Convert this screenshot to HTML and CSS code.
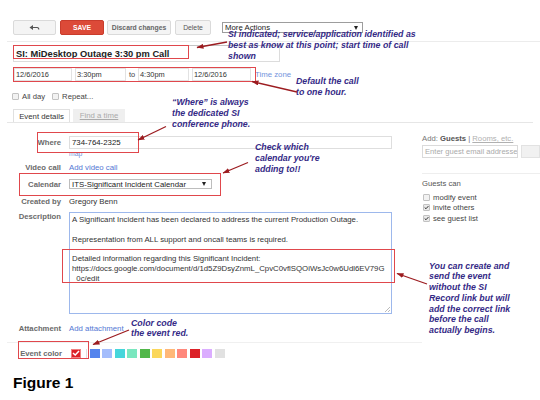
FILE: index.html
```html
<!DOCTYPE html>
<html>
<head>
<meta charset="utf-8">
<link rel="stylesheet" href="styles.css">
</head>
<body>
<div class="page">
  <div class="toolbar">
    <div class="btn btn-back">
      <svg width="11" height="6" viewBox="0 0 11 6"><path d="M0.5 2.5 L4 0 L4 5 Z" fill="#555"/><path d="M3.5 2.5 H8.2 Q9.8 2.5 9.8 4.6" stroke="#555" stroke-width="1.2" fill="none"/></svg>
    </div>
    <div class="btn btn-save">SAVE</div>
    <div class="btn btn-discard">Discard changes</div>
    <div class="btn btn-delete">Delete</div>
    <div class="more">More Actions<span class="caret"></span></div>
  </div>
  <div class="rule rule-top"></div>

  <div class="title-input">SI: MiDesktop Outage 3:30 pm Call</div>

  <div class="date-row">
    <div class="field f-date1">12/6/2016</div>
    <div class="field f-time1">3:30pm</div>
    <span class="to">to</span>
    <div class="field f-time2">4:30pm</div>
    <div class="field f-date2">12/6/2016</div>
    <span class="link tz">Time zone</span>
  </div>

  <div class="check-row">
    <span class="cb"></span><span class="cb-label">All day</span>
    <span class="cb cb-gap"></span><span class="cb-label">Repeat...</span>
  </div>

  <div class="tabs">
    <div class="tab tab-active">Event details</div>
    <div class="tab tab-inactive">Find a time</div>
  </div>

  <div class="main">
    <div class="form">
      <div class="row row-where">
        <div class="label">Where</div>
        <div class="input where-input">734-764-2325</div>
      </div>
      <div class="row row-map">
        <div class="label"></div>
        <span class="link map">map</span>
      </div>
      <div class="row row-video">
        <div class="label">Video call</div>
        <span class="link">Add video call</span>
      </div>
      <div class="row row-cal">
        <div class="label">Calendar</div>
        <div class="cal-select">ITS-Significant Incident Calendar<span class="caret"></span></div>
      </div>
      <div class="row row-created">
        <div class="label">Created by</div>
        <span class="value">Gregory Benn</span>
      </div>
      <div class="row row-desc">
        <div class="label">Description</div>
        <div class="desc">
          <div class="dline">A Significant Incident has been declared to address the current Production Outage.</div>
          <div class="dline"></div>
          <div class="dline">Representation from ALL support and oncall teams is required.</div>
          <div class="dline"></div>
          <div class="dline">Detailed information regarding this Significant Incident:</div>
          <div class="dline">https://docs.google.com/document/d/1d5Z9DsyZnmL_CpvC0vflSQOiWsJc0w6Udl6EV79G</div>
          <div class="dline">_0c/edit</div>
          <span class="grip"></span>
        </div>
      </div>
      <div class="row row-attach">
        <div class="label">Attachment</div>
        <span class="link">Add attachment</span>
      </div>
      <div class="rule rule-form"></div>
      <div class="row row-color">
        <div class="label">Event color</div>
        <div class="swatches">
          <span class="sw sw-checked">
            <svg width="8" height="6" viewBox="0 0 8 6"><path d="M1 3 L3.2 5 L7 1" stroke="#fff" stroke-width="1.5" fill="none"/></svg>
          </span>
          <span class="sw-sep"></span>
          <span class="sw c1"></span>
          <span class="sw c2"></span>
          <span class="sw c3"></span>
          <span class="sw c4"></span>
          <span class="sw c5"></span>
          <span class="sw c6"></span>
          <span class="sw c7"></span>
          <span class="sw c8"></span>
          <span class="sw c9"></span>
          <span class="sw c10"></span>
          <span class="sw c11"></span>
        </div>
      </div>
    </div>

    <div class="side">
      <div class="add-line"><span class="muted">Add:</span> <b>Guests</b> <span class="muted">|</span> <span class="rooms">Rooms, etc.</span></div>
      <div class="guest-row">
        <div class="guest-input">Enter guest email addresse</div>
        <div class="guest-btn"></div>
      </div>
      <div class="rule rule-side"></div>
      <div class="gc-title">Guests can</div>
      <div class="gc-row"><span class="cb"></span>modify event</div>
      <div class="gc-row"><span class="cb cb-on"><svg width="6" height="5" viewBox="0 0 6 5"><path d="M0.8 2.5 L2.4 4 L5.3 0.8" stroke="#333" stroke-width="1.2" fill="none"/></svg></span>invite others</div>
      <div class="gc-row"><span class="cb cb-on"><svg width="6" height="5" viewBox="0 0 6 5"><path d="M0.8 2.5 L2.4 4 L5.3 0.8" stroke="#333" stroke-width="1.2" fill="none"/></svg></span>see guest list</div>
    </div>
  </div>

  <div class="figure">Figure 1</div>

  <!-- annotation overlays -->
  <div class="hl hl-title"></div>
  <div class="hl hl-date"></div>
  <div class="hl hl-where"></div>
  <div class="hl hl-cal"></div>
  <div class="hl hl-desc"></div>
  <div class="hl hl-color"></div>

  <div class="note n1">SI indicated; service/application identified as<br>best as know at this point; start time of call<br>shown</div>
  <div class="note n2">Default the call<br>to one hour.</div>
  <div class="note n3">“Where” is always<br>the dedicated SI<br>conference phone.</div>
  <div class="note n4">Check which<br>calendar you're<br>adding to!!</div>
  <div class="note n5">You can create and<br>send the event<br>without the SI<br>Record link but will<br>add the correct link<br>before the call<br>actually begins.</div>
  <div class="note n6">Color code<br>the event red.</div>

  <svg class="arrows" width="540" height="400" viewBox="0 0 540 400">
    <defs>
      <marker id="ah" markerWidth="7" markerHeight="5" refX="6.5" refY="2.5" orient="auto" markerUnits="userSpaceOnUse">
        <path d="M0,0 L7,2.5 L0,5 Z" fill="#9c1c20"/>
      </marker>
    </defs>
    <g stroke="#9c1c20" stroke-width="1.3" fill="none">
      <line x1="227" y1="42" x2="197" y2="47.5" marker-end="url(#ah)"/>
      <line x1="297" y1="92" x2="252" y2="81.5" marker-end="url(#ah)"/>
      <line x1="166" y1="126.5" x2="138" y2="140" marker-end="url(#ah)"/>
      <line x1="248" y1="162.5" x2="223" y2="173" marker-end="url(#ah)"/>
      <line x1="427" y1="284" x2="397" y2="273.5" marker-end="url(#ah)"/>
      <line x1="129" y1="330" x2="93" y2="344.5" marker-end="url(#ah)"/>
    </g>
  </svg>
</div>
</body>
</html>
```

FILE: styles.css
```css
* { box-sizing: border-box; }
html, body { margin: 0; padding: 0; }
body {
  width: 540px;
  height: 400px;
  overflow: hidden;
  background: #fff;
  font-family: "Liberation Sans", Arial, sans-serif;
  color: #333;
}
.page { position: relative; width: 540px; height: 400px; }

/* toolbar */
.toolbar { display: flex; align-items: flex-start; padding: 20px 0 0 13px; height: 35px; }
.btn {
  height: 15px;
  display: flex; align-items: center; justify-content: center;
  background: #f4f4f4;
  border: 1px solid #dadada;
  border-radius: 2px;
  font-size: 6.8px; font-weight: bold; color: #666;
}
.btn-back { width: 43px; }
.btn-save { width: 44px; margin-left: 4px; background: #dc4a38; border-color: #c93c2c; color: #fff; }
.btn-discard { width: 64px; margin-left: 3px; }
.btn-delete { width: 36px; margin-left: 4px; font-weight: normal; color: #555; }
.more {
  margin: 2px 0 0 11px;
  width: 141px; height: 11px;
  border: 1px solid #9d9d9d;
  display: flex; align-items: center; justify-content: space-between;
  padding: 0 4px 0 2px;
  font-size: 7.8px; color: #222; background: #fff;
}
.caret { width: 0; height: 0; border-left: 2.5px solid transparent; border-right: 2.5px solid transparent; border-top: 4px solid #222; }

.rule { height: 1px; background: #ececec; }
.rule-top { margin: 6px 0 0 7px; }

/* title */
.title-input {
  margin: 3px 0 0 13px;
  width: 267px; height: 17px;
  border: 1px solid #dcdcdc; border-top-color: #c4c4c4;
  padding-left: 2px;
  display: flex; align-items: center;
  font-size: 9.3px; font-weight: bold; color: #222;
}

/* date row */
.date-row { display: flex; align-items: center; margin: 6px 0 0 14px; height: 13px; }
.field {
  height: 13px;
  border: 1px solid #e2e2e2;
  padding-left: 1px;
  display: flex; align-items: center;
  font-size: 7.4px; color: #333;
}
.f-date1 { width: 58px; }
.f-time1 { width: 51px; margin-left: 3px; }
.to { margin-left: 3px; width: 9px; font-size: 7.4px; color: #444; }
.f-time2 { width: 51px; margin-left: 0; }
.f-date2 { width: 59px; margin-left: 3px; }
.link { color: #5377d4; font-size: 7.8px; }
.tz { margin-left: 4px; color: #7393dc; }

/* checkbox row */
.check-row { display: flex; align-items: center; margin: 11px 0 0 12px; height: 8px; font-size: 7.7px; color: #444; }
.cb {
  width: 7px; height: 7px;
  border: 1px solid #c2c2c2; border-radius: 1px;
  background: #f2f2f2;
  display: inline-flex; align-items: center; justify-content: center;
  flex: none;
}
.cb-label { margin-left: 3px; }
.cb-gap { margin-left: 7px; }

/* tabs */
.tabs { display: flex; align-items: flex-end; margin: 9px 7px 0 7px; height: 14px; border-bottom: 1px solid #e6e6e6; padding-left: 6px; }
.tab { height: 13px; display: flex; align-items: center; justify-content: center; font-size: 7.8px; }
.tab-active { width: 57px; border: 1px solid #e0e0e0; border-bottom: none; background: #fff; color: #333; }
.tab-inactive { width: 52px; margin-left: 3px; background: #efefef; color: #aaa; text-decoration: underline; }

/* main */
.main { display: grid; grid-template-columns: 422px 118px; }
.form { display: flex; flex-direction: column; }
.row { display: flex; align-items: center; }
.label { width: 61px; margin-right: 8px; text-align: right; font-size: 7.7px; font-weight: bold; color: #6a6a6a; flex: none; }
.value { font-size: 7.8px; color: #333; }

.row-where { margin-top: 13px; height: 13px; }
.where-input { width: 323px; height: 13px; border: 1px solid #dedede; padding-left: 2px; display: flex; align-items: center; font-size: 7.8px; color: #222; }
.row-map { margin-top: 1px; height: 7px; }
.map { font-size: 6.8px; line-height: 7px; color: #7090d8; }
.row-video { margin-top: 5px; height: 10px; }
.row-cal { margin-top: 7px; height: 10px; }
.cal-select {
  width: 143px; height: 10px;
  border: 1px solid #bdbdbd; background: #fff;
  display: flex; align-items: center; justify-content: space-between;
  padding: 0 5px 0 2px;
  font-size: 7.8px; color: #222;
}
.row-created { margin-top: 7px; height: 10px; }
.row-desc { margin-top: 6px; height: 102px; align-items: flex-start; }
.row-desc .label { line-height: 9px; margin-top: 0; }
.desc {
  position: relative;
  width: 323px; height: 102px;
  border: 1px solid #9db8ec;
  padding: 2px 2px;
  font-size: 7.8px; line-height: 9.8px; color: #333;
}
.dline { height: 9.8px; white-space: nowrap; }
.grip { position: absolute; right: 1px; bottom: 1px; width: 5px; height: 5px; background: linear-gradient(135deg, transparent 45%, #bbb 45%, #bbb 55%, transparent 55%, transparent 75%, #bbb 75%, #bbb 85%, transparent 85%); }
.row-attach { margin-top: 9px; height: 10px; }
.rule-form { margin: 9px 0 0 7px; background: #f0f0f0; }
.row-color { margin-top: 5px; height: 10px; }
.row-color .label { width: 62px; margin-right: 9px; }
.swatches { display: flex; align-items: center; gap: 2.5px; }
.sw { width: 10px; height: 9px; display: inline-flex; align-items: center; justify-content: center; }
.sw-checked { background: #dc2127; border: 1px solid #f08080; }
.sw-sep { width: 1px; height: 9px; background: #e0e0e0; margin: 0 0.5px 0 2px; }
.c1 { background: #5484ed; }
.c2 { background: #a4bdfc; }
.c3 { background: #46d6db; }
.c4 { background: #7ae7bf; }
.c5 { background: #51b749; }
.c6 { background: #fbd75b; }
.c7 { background: #ffb878; }
.c8 { background: #ff887c; }
.c9 { background: #dc2127; }
.c10 { background: #dbadff; }
.c11 { background: #e1e1e1; }

/* side */
.side { display: flex; flex-direction: column; font-size: 7.7px; color: #444; }
.add-line { margin-top: 11px; height: 10px; line-height: 10px; white-space: nowrap; }
.add-line b { color: #555; }
.muted { color: #777; }
.rooms { color: #b0b0b0; text-decoration: underline; }
.guest-row { display: flex; margin-top: 1px; height: 13px; }
.guest-input { width: 101px; height: 13px; border: 1px solid #dadada; padding-left: 2px; display: flex; align-items: center; color: #aaa; font-size: 7.6px; white-space: nowrap; overflow: hidden; }
.guest-btn { width: 20px; height: 13px; margin-left: 3px; background: #f1f1f1; border: 1px solid #e2e2e2; }
.rule-side { margin-top: 15px; background: #eeeeee; }
.gc-title { margin-top: 5px; height: 10px; line-height: 10px; color: #555; }
.gc-row { display: flex; align-items: center; height: 10.5px; color: #444; }
.gc-title + .gc-row { margin-top: 3px; }
.gc-row .cb { margin: 0 3px 0 1px; }
.cb-on { background: #eaeaea; }

.figure { margin: 17px 0 0 13px; font-size: 15.5px; line-height: 15.5px; font-weight: bold; color: #000; }

/* overlays: highlight boxes */
.hl { position: absolute; border: 1px solid #e0474c; }
.hl-title { left: 13px; top: 45px; width: 176px; height: 14px; }
.hl-date { left: 13px; top: 67px; width: 243px; height: 15px; }
.hl-where { left: 37px; top: 132px; width: 102px; height: 21px; }
.hl-cal { left: 19px; top: 173px; width: 202px; height: 23px; }
.hl-desc { left: 62px; top: 249px; width: 333px; height: 34px; }
.hl-color { left: 18px; top: 341px; width: 71px; height: 18px; }

/* overlays: notes */
.note { position: absolute; font-size: 8.8px; line-height: 11px; font-style: italic; font-weight: bold; color: #352a86; white-space: nowrap; }
.n1 { left: 228px; top: 29px; }
.n2 { left: 296px; top: 75.5px; line-height: 11.3px; }
.n3 { left: 172px; top: 96.5px; }
.n4 { left: 255px; top: 142px; }
.n5 { left: 429px; top: 260.5px; line-height: 10.8px; }
.n6 { left: 131px; top: 317.5px; line-height: 10.7px; }

.arrows { position: absolute; left: 0; top: 0; pointer-events: none; }
```
